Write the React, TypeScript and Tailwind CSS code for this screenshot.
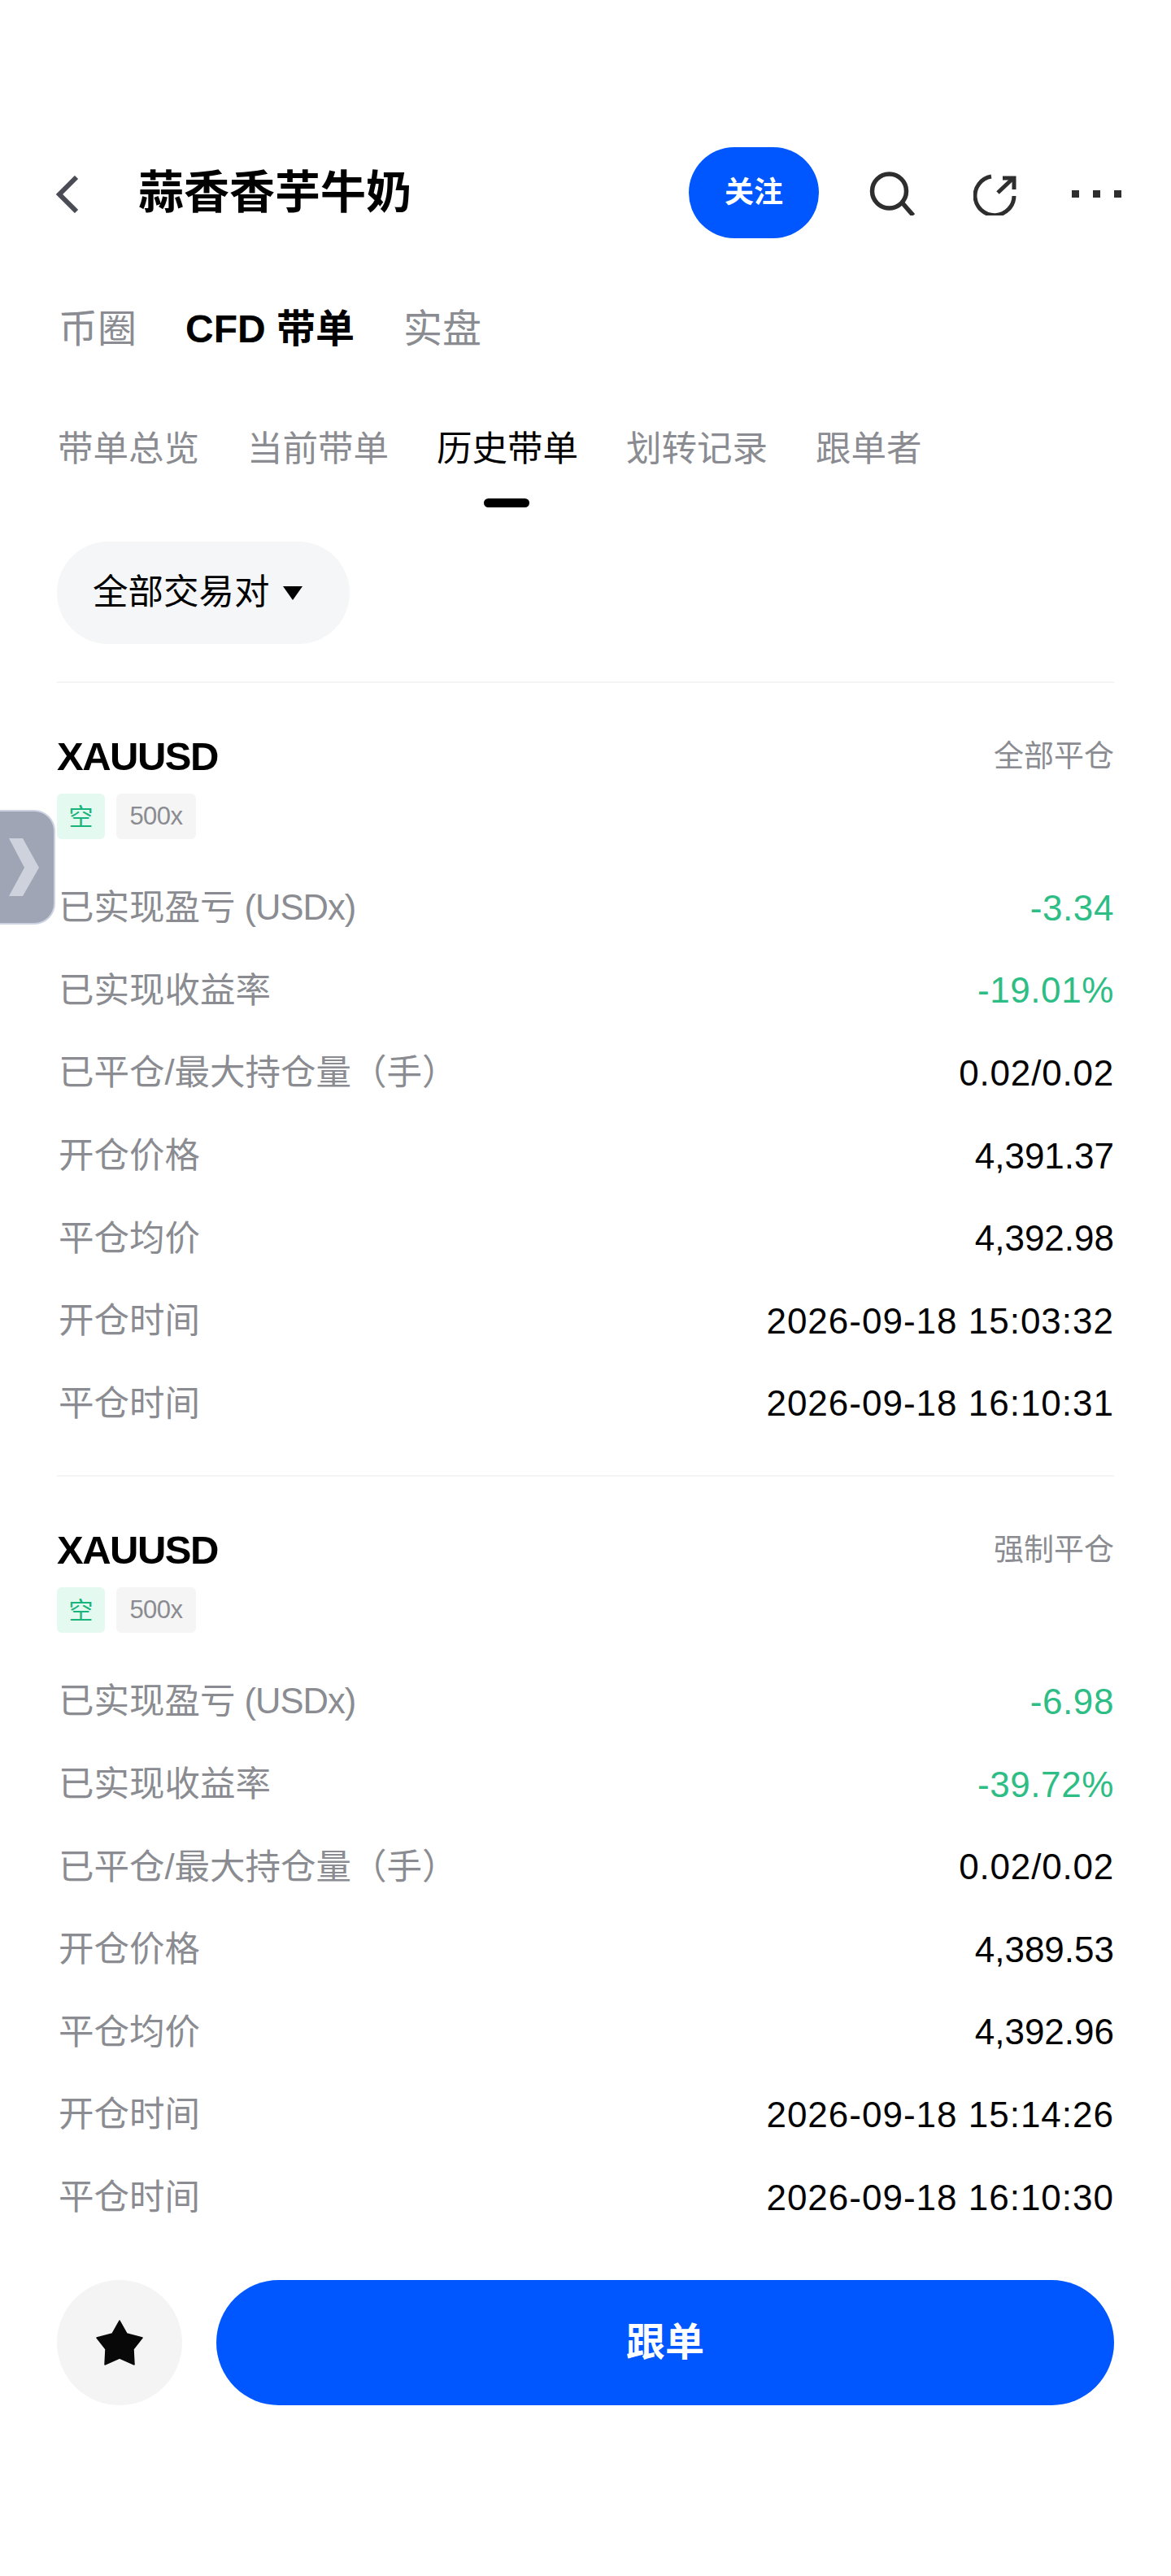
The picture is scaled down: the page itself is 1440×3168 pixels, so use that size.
const cjk = "font-['Liberation_Sans','Noto_Sans_CJK_SC',sans-serif]";

type Row = { label: string; unit?: string; value: string; kind?: "pnl" | "ratio" | "time" };
type Order = { status: string; rows: Row[] };

const orders: Order[] = [
  {
    status: "全部平仓",
    rows: [
      { label: "已实现盈亏", unit: " (USDx)", value: "-3.34", kind: "pnl" },
      { label: "已实现收益率", value: "-19.01%", kind: "pnl" },
      { label: "已平仓/最大持仓量（手）", value: "0.02/0.02", kind: "ratio" },
      { label: "开仓价格", value: "4,391.37" },
      { label: "平仓均价", value: "4,392.98" },
      { label: "开仓时间", value: "2026-09-18 15:03:32", kind: "time" },
      { label: "平仓时间", value: "2026-09-18 16:10:31", kind: "time" },
    ],
  },
  {
    status: "强制平仓",
    rows: [
      { label: "已实现盈亏", unit: " (USDx)", value: "-6.98", kind: "pnl" },
      { label: "已实现收益率", value: "-39.72%", kind: "pnl" },
      { label: "已平仓/最大持仓量（手）", value: "0.02/0.02", kind: "ratio" },
      { label: "开仓价格", value: "4,389.53" },
      { label: "平仓均价", value: "4,392.96" },
      { label: "开仓时间", value: "2026-09-18 15:14:26", kind: "time" },
      { label: "平仓时间", value: "2026-09-18 16:10:30", kind: "time" },
    ],
  },
];

const subTabs = ["带单总览", "当前带单", "历史带单", "划转记录", "跟单者"];

function valueClass(kind?: Row["kind"]) {
  if (kind === "pnl") return "text-[#2dbd85] tracking-[0.6px]";
  if (kind === "ratio") return "text-black tracking-[0.8px]";
  if (kind === "time") return "text-black tracking-[1px]";
  return "text-black";
}

function OrderCard({ order }: { order: Order }) {
  return (
    <section className="border-t-2 border-[#f5f5f5] pt-[60px] pb-[37px]">
      <div className="flex items-center justify-between h-[60px]">
        <span className="text-[49px] leading-[60px] font-bold tracking-[-1.5px] text-black">XAUUSD</span>
        <span className="text-[37px] leading-[60px] text-[#8a8c91] mt-[2px]">{order.status}</span>
      </div>
      <div className="flex gap-[14px] mt-[16px] mb-[34px]">
        <span className="w-[59px] h-[56px] rounded-[6px] bg-[#e4f9f0] text-[#18b47c] text-[30px] flex items-center justify-center">空</span>
        <span className="w-[98px] h-[56px] rounded-[6px] bg-[#f5f5f5] text-[#8a8c91] text-[31px] tracking-[-0.5px] flex items-center justify-center">500x</span>
      </div>
      {order.rows.map((row) => (
        <div key={row.label} className="flex items-center justify-between h-[101.6px]">
          <span className="text-[43.5px] text-[#8a8c91] pl-[2px]">
            {row.label}
            {row.unit && <span className="tracking-[-1px]">{row.unit}</span>}
          </span>
          <span className={`text-[44px] ${valueClass(row.kind)}`}>{row.value}</span>
        </div>
      ))}
    </section>
  );
}

export default function App() {
  return (
    <main className={`relative w-[1440px] h-[3168px] bg-white overflow-hidden ${cjk}`}>
      <header className="flex items-center h-[112px] mt-[181px] pl-[70px] pr-[61px]">
        <svg width="30" height="46" viewBox="0 0 30 46" fill="none" className="mr-[72px] ml-[-2px] mt-[4px]">
          <path d="M26 2 L5 23 L26 44" stroke="#4a4c55" strokeWidth="6" />
        </svg>
        <h1 className="text-[56px] font-bold text-black flex-1">蒜香香芋牛奶</h1>
        <button className="w-[160px] h-[112px] rounded-[56px] bg-[#0057ff] text-white text-[36px] font-bold">关注</button>
        <svg width="56" height="56" viewBox="0 0 56 56" fill="none" stroke="#2e2e2e" strokeWidth="5.5" className="ml-[62px]">
          <circle cx="24.5" cy="26" r="21" />
          <path d="M41 41 L54 56" />
        </svg>
        <svg width="56" height="56" viewBox="0 0 56 56" fill="none" stroke="#2e2e2e" strokeWidth="5" className="ml-[72px]">
          <path d="M22 8 A24 24 0 1 0 50 32" />
          <path d="M30 28 L48 11" />
          <path d="M36 10 H50 V24" />
        </svg>
        <div className="flex gap-[17px] ml-[65px] mt-[3px]">
          <span className="w-[9px] h-[9px] bg-[#2e2e2e]" />
          <span className="w-[9px] h-[9px] bg-[#2e2e2e]" />
          <span className="w-[9px] h-[9px] bg-[#2e2e2e]" />
        </div>
      </header>

      <nav className="flex gap-[60px] pl-[72px] mt-[80px] text-[48px] leading-[64px] text-[#8a8c91]">
        <span>币圈</span>
        <span className="font-bold text-black">CFD 带单</span>
        <span>实盘</span>
      </nav>

      <nav className="flex gap-[59px] pl-[71px] mt-[85px] text-[43.5px] leading-[60px] text-[#8a8c91]">
        {subTabs.map((tab) => (
          <span key={tab} className={tab === "历史带单" ? "relative text-black" : ""}>
            {tab}
            {tab === "历史带单" && (
              <span className="absolute left-[58px] top-[91px] w-[56px] h-[11px] rounded-full bg-black" />
            )}
          </span>
        ))}
      </nav>

      <div className="mt-[84px] ml-[70px] w-[360px] h-[126px] rounded-[63px] bg-[#f5f6f7] flex items-center pl-[44px] gap-[16px] text-[43.5px] text-black">
        全部交易对
        <span className="w-0 h-0 border-x-[12px] border-x-transparent border-t-[17px] border-t-black" />
      </div>

      <div className="mt-[46px] mx-[70px]">
        {orders.map((order) => (
          <OrderCard key={order.status} order={order} />
        ))}
      </div>

      {/* floating drawer handle on the left edge */}
      <div className="absolute left-0 top-[996px] w-[68px] h-[141px] rounded-r-[26px] bg-[#9fa5b5] border-2 border-l-0 border-[#ccd2e0] flex items-center">
        <svg width="37" height="71" viewBox="0 0 37 71" className="ml-[11px]">
          <path d="M0 0 H17 L37 36 L17 71 H0 L19 36 Z" fill="#cdd2dc" />
        </svg>
      </div>

      <footer className="absolute left-0 right-0 top-[2804px] flex gap-[42px] px-[70px]">
        <div className="w-[154px] h-[154px] rounded-full bg-[#f4f4f4] flex items-center justify-center">
          <svg width="58" height="56" viewBox="0 0 58 56">
            <path d="M29 1 L38 17 L57 22 L46 36 L47 55 L29 47 L11 55 L12 36 L1 22 L20 17 Z" fill="#080808" stroke="#080808" strokeWidth="1.5" strokeLinejoin="round" />
          </svg>
        </div>
        <button className="flex-1 h-[154px] rounded-[77px] bg-[#0057ff] text-white text-[48px] font-bold">跟单</button>
      </footer>
    </main>
  );
}
